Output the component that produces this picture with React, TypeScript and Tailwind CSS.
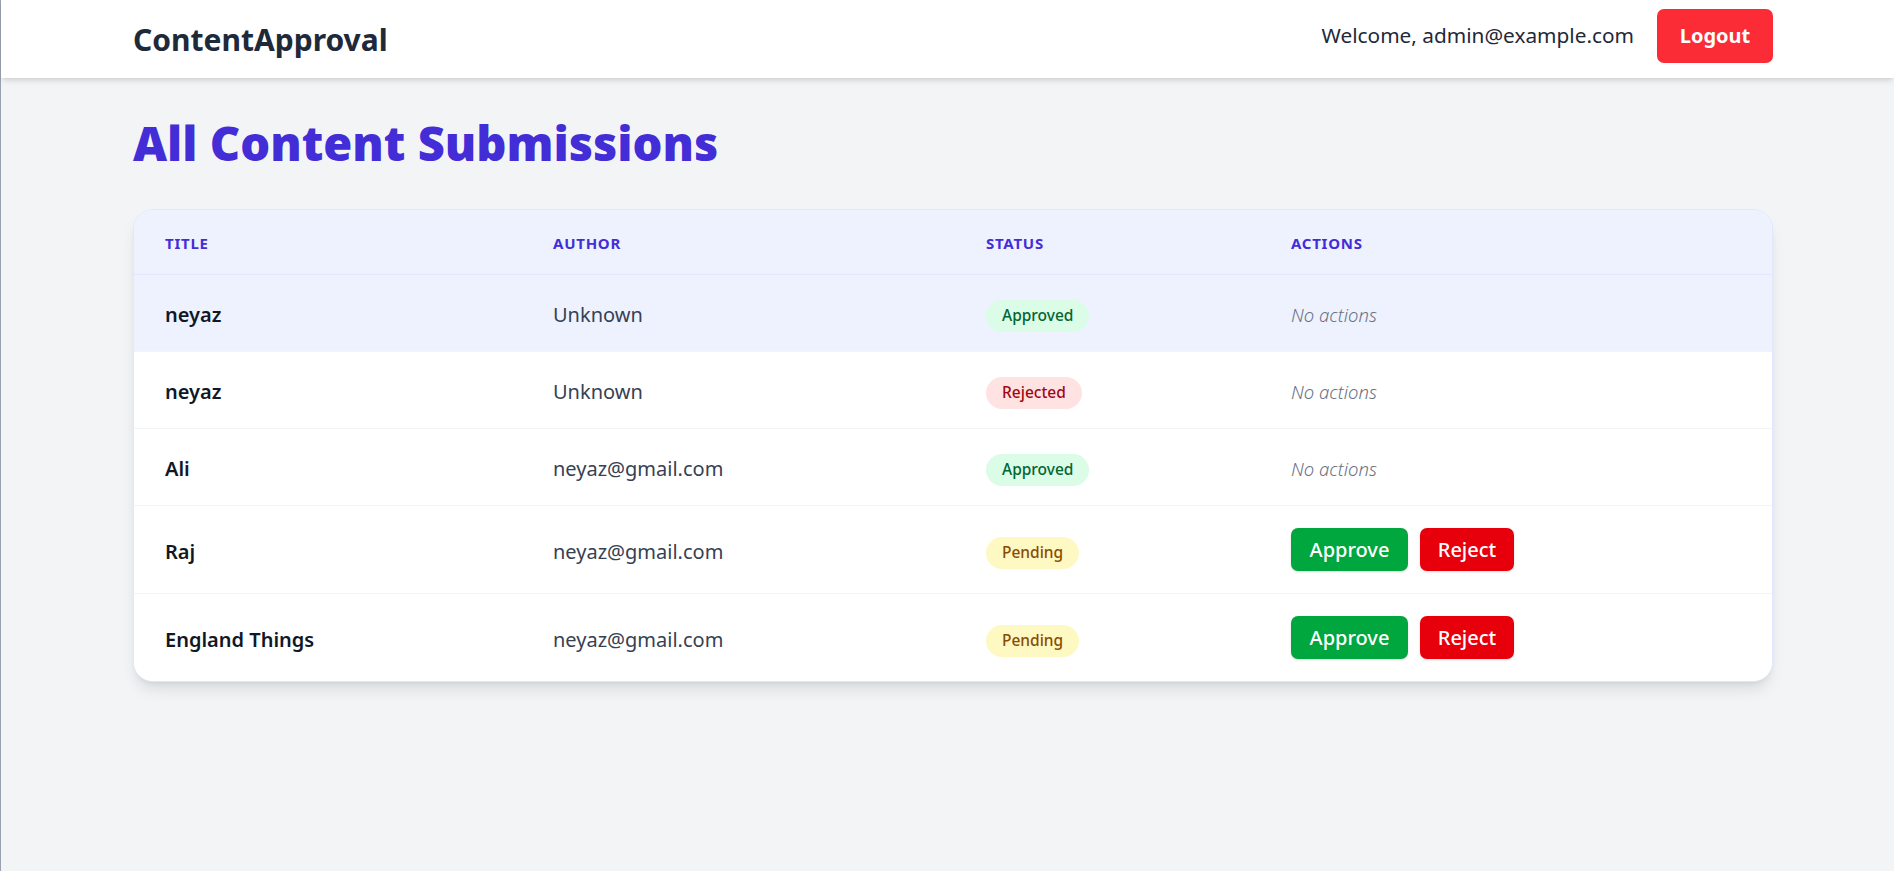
import React from "react"

type Status = "Approved" | "Rejected" | "Pending"

interface Submission {
  id: number
  title: string
  author: string
  status: Status
}

const submissions: Submission[] = [
  { id: 1, title: "neyaz", author: "Unknown", status: "Approved" },
  { id: 2, title: "neyaz", author: "Unknown", status: "Rejected" },
  { id: 3, title: "Ali", author: "neyaz@gmail.com", status: "Approved" },
  { id: 4, title: "Raj", author: "neyaz@gmail.com", status: "Pending" },
  { id: 5, title: "England Things", author: "neyaz@gmail.com", status: "Pending" },
]

const badgeStyles: Record<Status, string> = {
  Approved: "bg-green-100 text-green-800",
  Rejected: "bg-red-100 text-red-800",
  Pending: "bg-yellow-100 text-yellow-800",
}

const cols = "grid grid-cols-[388px_433px_305px_1fr]"

function StatusBadge({ status }: { status: Status }) {
  return (
    <span
      className={`inline-flex items-center h-[32px] px-[16px] rounded-full text-[15.5px] font-medium ${badgeStyles[status]}`}
    >
      {status}
    </span>
  )
}

export default function App() {
  return (
    <div
      className="min-h-screen bg-gray-100 border-l border-gray-400 pl-[11px]"
      style={{ fontFamily: '"Noto Sans", "Open Sans", sans-serif' }}
    >
      {/* Navbar */}
      <nav className="h-[78px] bg-white shadow-md -ml-[11px] pl-[11px]">
        <div className="w-[1640px] h-full mx-auto flex items-center justify-between">
          <h1 className="text-[30px] font-bold text-gray-800">ContentApproval</h1>
          <div className="flex items-center gap-[23px] -mt-[6px]">
            <span className="text-[20.8px] text-gray-800">Welcome, admin@example.com</span>
            <button className="h-[54px] w-[116px] rounded-[7px] bg-red-500 text-white text-[20px] font-bold">
              Logout
            </button>
          </div>
        </div>
      </nav>

      {/* Main */}
      <main className="w-[1640px] mx-auto pt-[40px]">
        <h2 className="text-[47px] leading-[50px] font-black text-indigo-700 mb-[41px]">
          All Content Submissions
        </h2>

        <div className="bg-white rounded-[20px] border border-indigo-100 shadow-lg overflow-hidden">
          <div className={`${cols} h-[65px] items-center bg-indigo-50 border-b border-indigo-100`}>
            {["Title", "Author", "Status", "Actions"].map((h) => (
              <div
                key={h}
                className="px-[31px] translate-y-[1px] text-[15px] font-bold uppercase tracking-wider text-indigo-700"
              >
                {h}
              </div>
            ))}
          </div>

          {submissions.map((s, i) => (
            <div
              key={s.id}
              className={`${cols} items-center py-[22px] ${
                i < submissions.length - 1 ? "border-b border-gray-100" : ""
              } ${i === 0 ? "bg-indigo-50" : "bg-white"}`}
            >
              <div className="px-[31px] translate-y-[2px] text-[20px] font-semibold text-gray-900">
                {s.title}
              </div>
              <div className="px-[31px] translate-y-[2px] text-[20px] text-gray-700">{s.author}</div>
              <div className="px-[31px] translate-y-[3px]">
                <StatusBadge status={s.status} />
              </div>
              <div className="px-[31px]">
                {s.status === "Pending" ? (
                  <div className="flex items-center gap-[12px]">
                    <button className="h-[43px] w-[117px] rounded-[7px] bg-green-600 text-white text-[20px] font-medium shadow-sm">
                      Approve
                    </button>
                    <button className="h-[43px] w-[94px] rounded-[7px] bg-red-600 text-white text-[20px] font-medium shadow-sm">
                      Reject
                    </button>
                  </div>
                ) : (
                  <span className="inline-block translate-y-[2px] text-[18.5px] font-light italic text-gray-500">
                    No actions
                  </span>
                )}
              </div>
            </div>
          ))}
        </div>
      </main>
    </div>
  )
}
